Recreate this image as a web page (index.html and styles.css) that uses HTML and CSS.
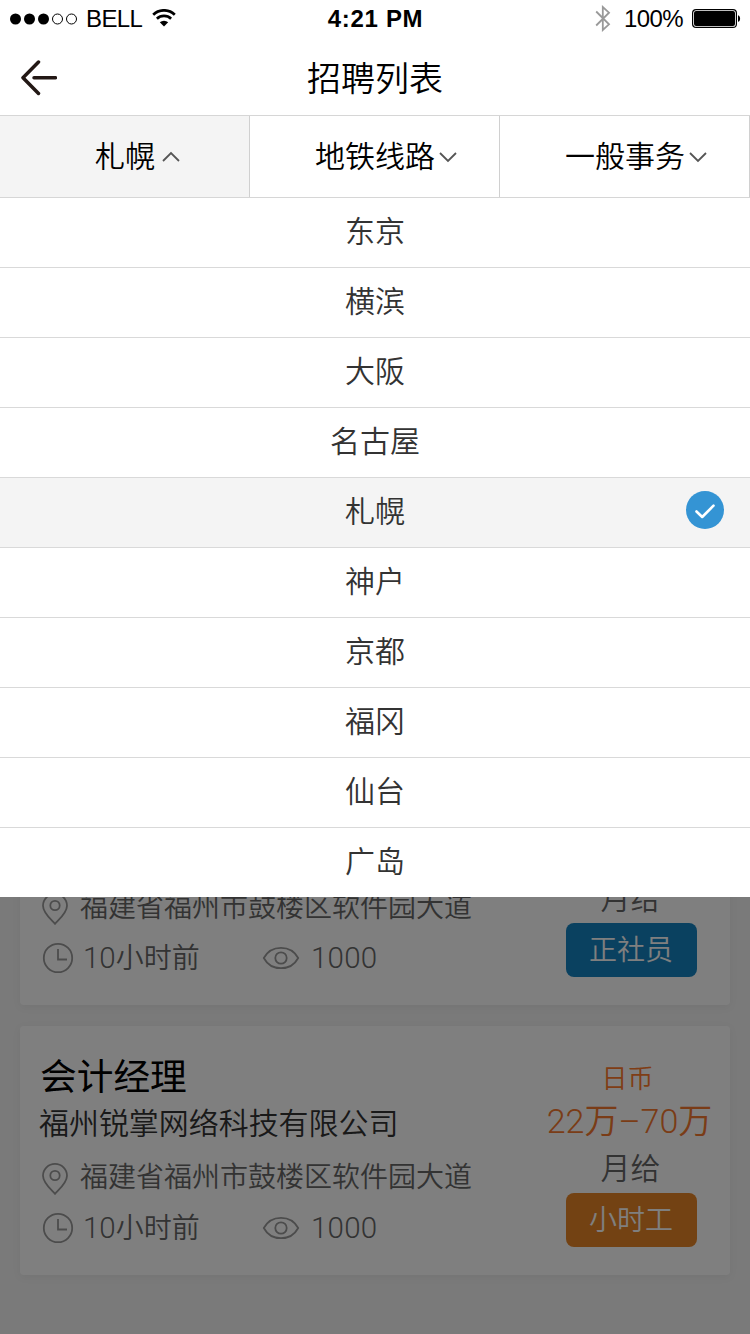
FILE: index.html
```html
<!DOCTYPE html>
<html lang="zh-CN">
<head>
<meta charset="utf-8">
<title>招聘列表</title>
<link rel="stylesheet" href="styles.css">
</head>
<body>
<svg class="sprite" aria-hidden="true">
  <symbol id="pin" viewBox="0 0 28 34"><path d="M14 31.800C9.500 27 2 21 2 13.800a12 12 0 0 1 24 0C26 21 18.500 27 14 31.800Z"/><circle cx="14" cy="13.500" r="4.700"/></symbol>
  <symbol id="clock" viewBox="0 0 32 32"><circle cx="16" cy="16" r="14.200"/><path d="M16 7v10.500h9"/></symbol>
  <symbol id="eye" viewBox="0 0 38 24"><path d="M1.800 12C5 6 11 1.800 19 1.800S33 6 36.200 12C33 18 27 22.200 19 22.200S5 18 1.800 12Z"/><circle cx="19" cy="12" r="5.700"/></symbol>
</svg>
<div class="screen">
  <div class="status">
    <div class="status-left">
      <svg class="signal" viewBox="0 0 68 12"><circle cx="5.500" cy="6" r="5.500"/><circle cx="19.500" cy="6" r="5.500"/><circle cx="33.500" cy="6" r="5.500"/><circle class="hollow" cx="47.500" cy="6" r="5"/><circle class="hollow" cx="61.500" cy="6" r="5"/></svg>
      <span class="carrier">BELL</span>
      <svg class="wifi" viewBox="0 0 24 18"><path d="M1.200 5.700a15.500 15.500 0 0 1 21.600 0"/><path d="M4.900 9.700a10.200 10.200 0 0 1 14.200 0"/><path class="dot" d="M12 17.600 7.800 13.300a6.200 6.200 0 0 1 8.400 0Z"/></svg>
    </div>
    <span class="time">4:21 PM</span>
    <div class="status-right">
      <svg class="bluetooth" viewBox="0 0 16 27"><path d="M1.200 6.500 14 19.300 7.800 25V2L14 7.700 1.200 20.500"/></svg>
      <span class="percent">100%</span>
      <svg class="battery" viewBox="0 0 50 20"><rect class="case" x=".6" y=".6" width="43.800" height="17.800" rx="3.500"/><rect x="2" y="2" width="41" height="15" rx="2"/><path d="M46 6.200c2.800.6 2.800 6 0 6.600Z"/></svg>
    </div>
  </div>
  <header class="titlebar">
    <svg class="back" viewBox="0 0 36 36"><path d="M17.500 2 2 17.700 17.500 33.500M13 17.700h21.500"/></svg>
    <h1>招聘列表</h1>
  </header>
  <nav class="tabs">
    <div class="tab active short"><span>札幌</span><svg class="chevron" viewBox="0 0 18 12"><path d="M1 10 9 2l8 8"/></svg></div>
    <div class="tab"><span>地铁线路</span><svg class="chevron" viewBox="0 0 18 12"><path d="M1 2l8 8 8-8"/></svg></div>
    <div class="tab"><span>一般事务</span><svg class="chevron" viewBox="0 0 18 12"><path d="M1 2l8 8 8-8"/></svg></div>
  </nav>
  <ul class="options">
    <li>东京</li>
    <li>横滨</li>
    <li>大阪</li>
    <li>名古屋</li>
    <li class="selected">札幌<svg class="check" viewBox="0 0 38 38"><circle cx="19" cy="19" r="19"/><path d="M10.500 20.500 16.200 26 27.500 14.700"/></svg></li>
    <li>神户</li>
    <li>京都</li>
    <li>福冈</li>
    <li>仙台</li>
    <li>广岛</li>
  </ul>
  <main class="results">
    <article class="card">
      <div class="info">
        <div class="line address"><svg class="pin"><use href="#pin"/></svg><span>福建省福州市鼓楼区软件园大道</span></div>
        <div class="line meta"><svg class="clock"><use href="#clock"/></svg><span class="ago"><span class="num">10</span>小时前</span><svg class="eye"><use href="#eye"/></svg><span class="num">1000</span></div>
      </div>
      <div class="pay">
        <div class="period">月给</div>
        <div class="badge blue">正社员</div>
      </div>
    </article>
    <article class="card">
      <div class="info">
        <h2>会计经理</h2>
        <div class="company">福州锐掌网络科技有限公司</div>
        <div class="line address"><svg class="pin"><use href="#pin"/></svg><span>福建省福州市鼓楼区软件园大道</span></div>
        <div class="line meta"><svg class="clock"><use href="#clock"/></svg><span class="ago"><span class="num">10</span>小时前</span><svg class="eye"><use href="#eye"/></svg><span class="num">1000</span></div>
      </div>
      <div class="pay">
        <div class="currency">日币</div>
        <div class="amount">22万–70万</div>
        <div class="period">月给</div>
        <div class="badge orange">小时工</div>
      </div>
    </article>
  </main>
</div>
</body>
</html>
```
FILE: styles.css
```css
* { box-sizing: border-box; }
body { margin: 0; background: #fff; font-family: "Noto Sans CJK SC", sans-serif; font-weight: 350; }
h1, h2, ul { margin: 0; padding: 0; font-weight: 350; list-style: none; }
svg { display: block; flex: none; }
.sprite { display: none; }
.screen { width: 750px; height: 1334px; display: flex; flex-direction: column; overflow: hidden; }

.status { height: 38px; display: grid; grid-template-columns: 1fr auto 1fr; align-items: center; padding: 0 9px 0 10px; font: 400 24px/38px "Liberation Sans", Arial, sans-serif; color: #000; }
.status-left, .status-right { display: flex; align-items: center; }
.status-right { justify-content: flex-end; }
.signal { width: 68px; height: 12px; }
.signal .hollow { fill: none; stroke: #000; stroke-width: 1; }
.carrier { margin-left: 8px; width: 66px; letter-spacing: -.6px; }
.wifi { width: 24px; height: 18px; margin-top: -2px; fill: none; stroke: #000; stroke-width: 2.700; }
.wifi .dot { fill: #000; stroke: none; }
.time { font-weight: 700; letter-spacing: .7px; }
.bluetooth { width: 16px; height: 27px; margin: -1px 13px 0 0; fill: none; stroke: #999; stroke-width: 1.800; }
.percent { margin-right: 9px; letter-spacing: -.6px; }
.battery { width: 50px; height: 20px; margin: -1px -1px 0 0; }
.battery .case { fill: none; stroke: #000; stroke-width: 1.200; }

.titlebar { height: 77px; display: grid; grid-template-columns: 60px 1fr 60px; align-items: center; }
.back { width: 36px; height: 36px; margin: 3px 0 0 21px; fill: none; stroke: #231815; stroke-width: 3.500; stroke-linecap: round; stroke-linejoin: round; }
h1 { font-size: 34px; line-height: 77px; text-align: center; color: #000; }

.tabs { height: 83px; flex: none; display: grid; grid-template-columns: repeat(3, 1fr); border-top: 1px solid #d6d6d6; border-bottom: 1px solid #d6d6d6; }
.tab { display: flex; align-items: center; padding: 0 0 4px 65px; border-right: 1px solid #d0d0d0; font-size: 30px; line-height: 77px; color: #000; }
.tab.active { background: #f4f4f4; }
.tab.short { padding-left: 95px; }
.chevron { width: 18px; height: 12px; margin: 4px 0 0 4px; fill: none; stroke: #555; stroke-width: 1.800; }
.short .chevron { margin-left: 7px; }

.options { flex: none; text-align: center; color: #333; font-size: 30px; line-height: 63px; }
.options li { position: relative; height: 70px; border-bottom: 1px solid #d9d9d9; }
.options li:last-child { height: 69px; border-bottom: 0; }
.options .selected { background: #f4f4f4; }
.check { position: absolute; right: 26px; top: 13px; width: 38px; height: 38px; fill: #3494d4; }
.check path { fill: none; stroke: #fff; stroke-width: 2.600; stroke-linecap: round; stroke-linejoin: round; }

.results { position: relative; height: 437px; display: flex; flex-direction: column; justify-content: flex-end; gap: 21px; padding: 0 20px 59px; background: #f4f4f4; overflow: hidden; }
.results::after { content: ""; position: absolute; inset: 0; background: rgba(0, 0, 0, .5); }
.card { flex: none; height: 249px; display: flex; justify-content: space-between; background: #fff; border-radius: 4px; box-shadow: 0 2px 10px rgba(0, 0, 0, .05); color: #666; }
.info { display: flex; flex-direction: column; justify-content: flex-end; padding: 0 0 21px 20px; }
h2 { font-size: 36.700px; line-height: 46px; font-weight: 400; color: #000; }
.company { margin: 0 0 4px -1px; font-size: 30px; line-height: 49px; color: #333; letter-spacing: -.05px; }
.line { display: flex; align-items: center; font-size: 28px; line-height: 52px; height: 52px; }
.line svg { fill: none; stroke: #999; stroke-width: 1.800; }
.address span { margin-top: -2px; }
.pin { width: 28px; height: 34px; margin: 5px 11px 0 1px; }
.clock { width: 32px; height: 32px; margin: 0 9px 0 2px; }
.eye { width: 38px; height: 24px; margin: -1px 11px 0 0; }
.num { font-family: Roboto, sans-serif; font-weight: 300; font-size: 29.500px; }
.ago { width: 179px; }
.meta > span { margin-top: -3px; }
.meta > .num { margin-top: 0; letter-spacing: .2px; }
.pay { width: 201px; display: flex; flex-direction: column; align-items: center; justify-content: flex-end; padding-bottom: 28px; }
.currency { margin-right: 4px; font-size: 26px; line-height: 38px; color: #ff7b2d; }
.amount { font-family: Roboto, "Noto Sans CJK SC", sans-serif; font-size: 34px; font-weight: 350; line-height: 48px; color: #f5792f; }
.amount { padding-top: 1px; }
.period { margin: 0 0 5px 2px; font-size: 30px; line-height: 43px; }
.badge { width: 131px; height: 54px; margin-left: 3px; border-radius: 8px; font-size: 28px; line-height: 51px; text-align: center; color: #fff; }
.blue { background: #1482c0; }
.orange { background: #e68426; }
```
